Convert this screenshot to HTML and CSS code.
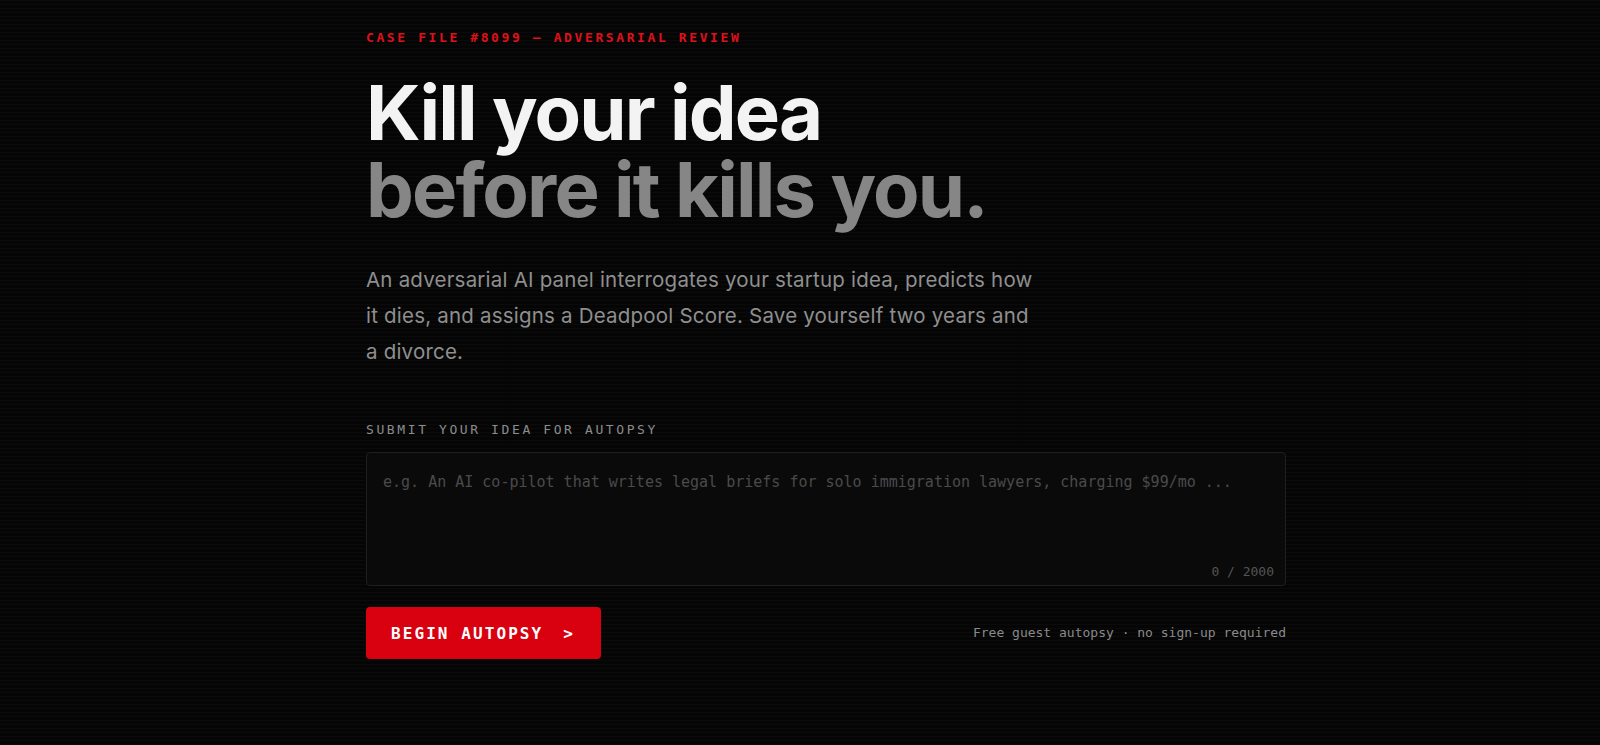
FILE: index.html
```html
<!DOCTYPE html>
<html lang="en">
<head>
<meta charset="utf-8">
<title>Kill your idea before it kills you.</title>
<link rel="stylesheet" href="styles.css">
</head>
<body>
<main class="page">
  <section class="hero">
    <p class="eyebrow">CASE FILE #8099 — ADVERSARIAL REVIEW</p>
    <h1 class="headline">
      <span class="headline-main">Kill your idea</span>
      <span class="headline-sub">before it kills you.</span>
    </h1>
    <p class="lede">An adversarial AI panel interrogates your startup idea, predicts how it dies, and assigns a Deadpool Score. Save yourself two years and a divorce.</p>

    <form class="submit">
      <label class="field-label" for="idea">SUBMIT YOUR IDEA FOR AUTOPSY</label>
      <div class="field">
        <textarea id="idea" class="idea-input" maxlength="2000" placeholder="e.g. An AI co-pilot that writes legal briefs for solo immigration lawyers, charging $99/mo ..."></textarea>
        <span class="counter">0 / 2000</span>
      </div>
      <div class="actions">
        <button type="button" class="cta">BEGIN AUTOPSY<span class="cta-arrow">&gt;</span></button>
        <span class="note">Free guest autopsy · no sign-up required</span>
      </div>
    </form>
  </section>
</main>
</body>
</html>
```

FILE: styles.css
```css
* { box-sizing: border-box; }

html, body {
  margin: 0;
  padding: 0;
  height: 100%;
}

body {
  background-color: #050505;
  background-image: repeating-linear-gradient(
    to bottom,
    rgba(255, 255, 255, 0.022) 0,
    rgba(255, 255, 255, 0.022) 1px,
    transparent 1px,
    transparent 4px
  );
  color: #f2f2f2;
  font-family: Inter, "Noto Sans", sans-serif;
  overflow: hidden;
}

.page {
  max-width: 972px;
  margin: 0 auto;
  padding: 30px 0 0 52px;
}

.eyebrow {
  margin: 0;
  font-family: "DejaVu Sans Mono", "Liberation Mono", monospace;
  font-weight: 700;
  font-size: 13px;
  line-height: 16px;
  letter-spacing: 0.2em;
  color: #e0101a;
}

.headline {
  margin: 28px 0 0;
  font-family: Inter, "Noto Sans", sans-serif;
  font-weight: 700;
  font-size: 76px;
  line-height: 77px;
  letter-spacing: -0.024em;
}

.headline-main,
.headline-sub {
  display: block;
}

.headline-main { color: #f3f3f3; }
.headline-sub { color: #868686; }

.lede {
  margin: 34px 0 0;
  max-width: 672px;
  font-size: 20.5px;
  line-height: 36px;
  color: #8f8f8f;
  letter-spacing: 0.01em;
}

.submit {
  margin-top: 52px;
  width: 920px;
}

.field-label {
  display: block;
  font-family: "DejaVu Sans Mono", "Liberation Mono", monospace;
  font-size: 13px;
  line-height: 16px;
  letter-spacing: 0.2em;
  color: #8c8c8c;
}

.field {
  position: relative;
  margin-top: 14px;
}

.idea-input {
  display: block;
  width: 100%;
  height: 134px;
  margin: 0;
  padding: 18px 16px;
  resize: none;
  background: #0a0a0a;
  border: 1px solid #1f1f1f;
  border-radius: 4px;
  color: #e6e6e6;
  font-family: "DejaVu Sans Mono", "Liberation Mono", monospace;
  font-size: 15px;
  line-height: 1.5;
  outline: none;
}

.idea-input::placeholder {
  color: #4a4a4a;
  opacity: 1;
}

.counter {
  position: absolute;
  right: 12px;
  bottom: 6px;
  font-family: "DejaVu Sans Mono", "Liberation Mono", monospace;
  font-size: 13px;
  line-height: 16px;
  color: #545454;
}

.actions {
  display: flex;
  align-items: center;
  justify-content: space-between;
  margin-top: 21px;
}

.cta {
  display: inline-flex;
  align-items: center;
  height: 52px;
  padding: 0 26px 0 25px;
  background: #d9000f;
  border: 0;
  border-radius: 4px;
  color: #ffffff;
  font-family: "DejaVu Sans Mono", "Liberation Mono", monospace;
  font-weight: 700;
  font-size: 16px;
  letter-spacing: 0.13em;
  cursor: pointer;
}

.cta-arrow {
  margin-left: 20px;
}

.note {
  font-family: "DejaVu Sans Mono", "Liberation Mono", monospace;
  font-size: 13px;
  line-height: 16px;
  color: #8a8a8a;
}
```
